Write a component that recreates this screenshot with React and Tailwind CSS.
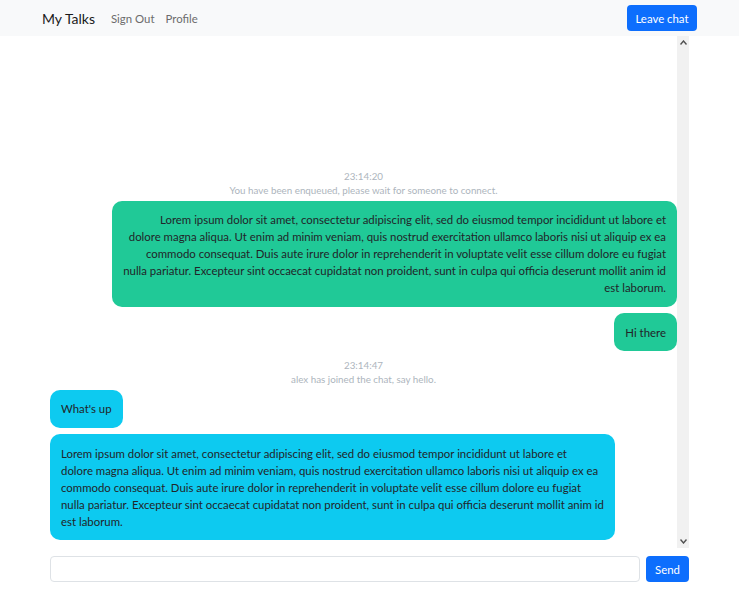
const LOREM_LINES = [
  'Lorem ipsum dolor sit amet, consectetur adipiscing elit, sed do eiusmod tempor incididunt ut labore et',
  'dolore magna aliqua. Ut enim ad minim veniam, quis nostrud exercitation ullamco laboris nisi ut aliquip ex ea',
  'commodo consequat. Duis aute irure dolor in reprehenderit in voluptate velit esse cillum dolore eu fugiat',
  'nulla pariatur. Excepteur sint occaecat cupidatat non proident, sunt in culpa qui officia deserunt mollit anim id',
  'est laborum.',
];

const messages = [
  { type: 'system', time: '23:14:20', text: 'You have been enqueued, please wait for someone to connect.' },
  { type: 'mine', lines: LOREM_LINES },
  { type: 'mine', lines: ['Hi there'] },
  { type: 'system', time: '23:14:47', text: 'alex has joined the chat, say hello.' },
  { type: 'theirs', lines: ["What's up"] },
  { type: 'theirs', lines: LOREM_LINES },
];

function SystemNote({ time, text, first }) {
  return (
    <div className={`${first ? '' : 'mt-[6.5px]'} text-center text-[9.8px] leading-[14px] text-[#adb5bd]`}>
      <div>{time}</div>
      <div>{text}</div>
    </div>
  );
}

function Bubble({ mine, lines, afterSystem }) {
  return (
    <div className={`flex ${mine ? 'justify-end' : 'justify-start'} ${afterSystem ? 'mt-[4px]' : 'mt-[6.5px]'}`}>
      <div
        className={`max-w-[92%] rounded-[10px] px-[11px] py-[10.5px] ${
          mine ? 'bg-[#20c997] text-right' : 'bg-[#0dcaf0] text-left'
        }`}
      >
        {lines.map((l, i) => (
          <div key={i} className="whitespace-nowrap">
            {l}
          </div>
        ))}
      </div>
    </div>
  );
}

export default function App() {
  return (
    <div className="h-[595px] flex flex-col bg-white text-[#212529] text-[11.4px] leading-[17px] font-['Lato',sans-serif]">
      {/* navbar */}
      <nav className="h-[36px] shrink-0 bg-[#f8f9fa] flex items-center justify-between px-[42px]">
        <div className="flex items-center">
          <span className="text-[14px] text-[#1a1a1a] mr-[16px]">My Talks</span>
          <a className="text-[#6c6c6c] mr-[11px]">Sign Out</a>
          <a className="text-[#6c6c6c]">Profile</a>
        </div>
        <button className="h-[26px] w-[70px] rounded-[4px] bg-[#0d6efd] text-white">Leave chat</button>
      </nav>

      {/* chat body */}
      <div className="flex-1 min-h-0 flex px-[50px]">
        <div className="flex-1 flex flex-col justify-end pb-[8px]">
          {messages.map((m, i) =>
            m.type === 'system' ? (
              <SystemNote key={i} time={m.time} text={m.text} first={i === 0} />
            ) : (
              <Bubble
                key={i}
                mine={m.type === 'mine'}
                lines={m.lines}
                afterSystem={messages[i - 1]?.type === 'system'}
              />
            )
          )}
        </div>
        <div className="w-[12px] bg-[#f1f1f1] flex flex-col items-center justify-between py-[4px]">
          <svg width="7" height="5" viewBox="0 0 7 5">
            <path d="M0.5 4.5 L3.5 1 L6.5 4.5" fill="none" stroke="#505050" strokeWidth="1.4" />
          </svg>
          <svg width="7" height="5" viewBox="0 0 7 5">
            <path d="M0.5 0.5 L3.5 4 L6.5 0.5" fill="none" stroke="#505050" strokeWidth="1.4" />
          </svg>
        </div>
      </div>

      {/* input row */}
      <div className="shrink-0 flex gap-[6px] px-[50px] pt-[8px] pb-[13px]">
        <input className="flex-1 h-[26px] rounded-[4px] border border-[#dee2e6] bg-white px-[8px] outline-none" />
        <button className="h-[26px] w-[43px] rounded-[4px] bg-[#0d6efd] text-white">Send</button>
      </div>
    </div>
  );
}
